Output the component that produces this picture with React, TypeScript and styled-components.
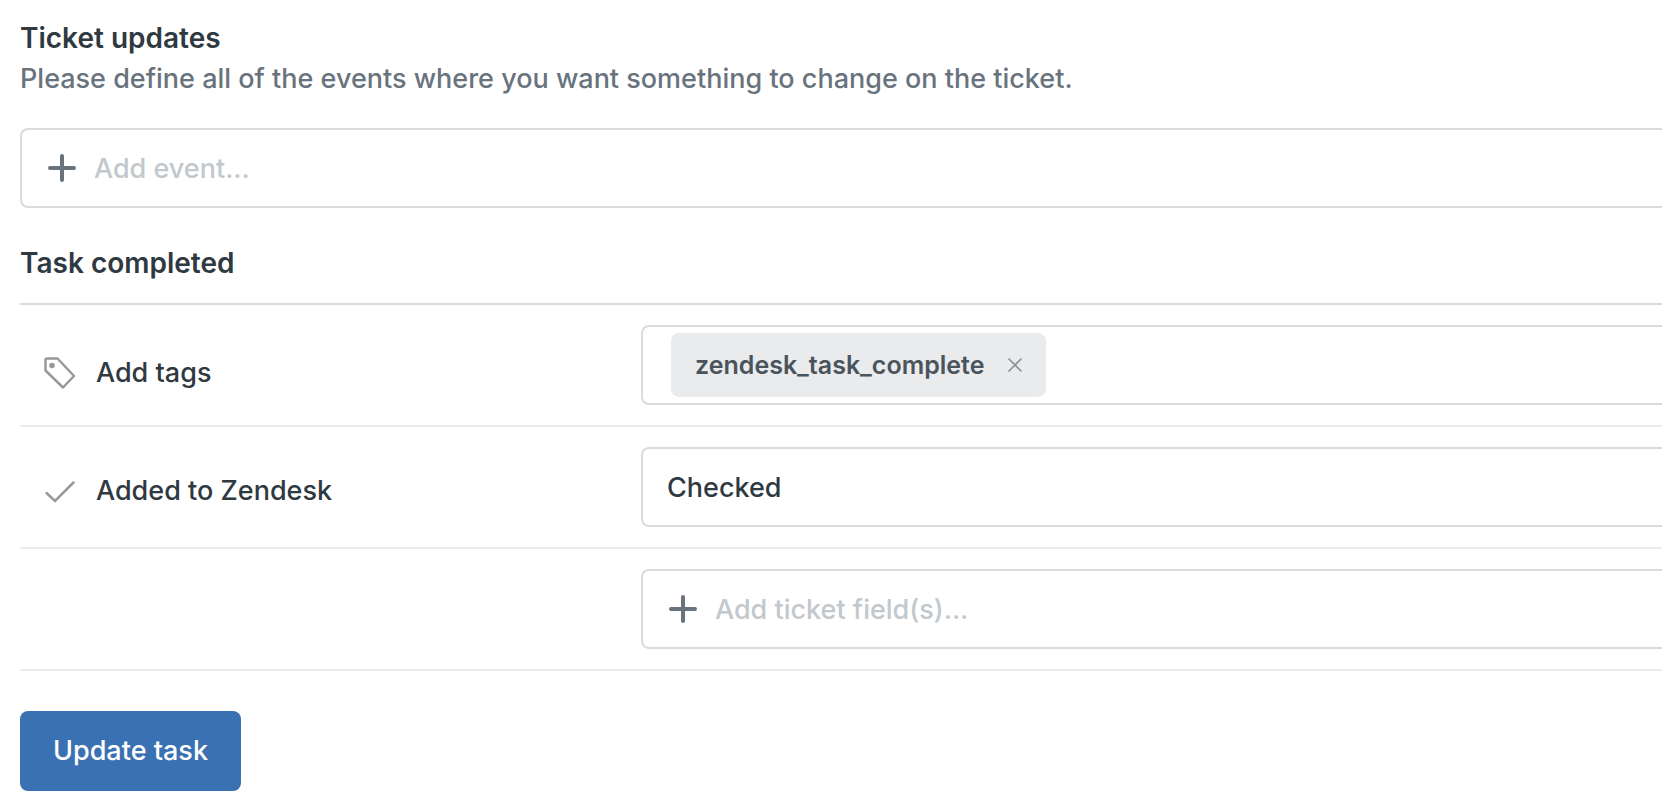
import React from "react";
import styled, { createGlobalStyle } from "styled-components";

const GlobalStyle = createGlobalStyle`
  *, *::before, *::after { box-sizing: border-box; }
  body {
    margin: 0;
    background: #fff;
    color: #2f3941;
    font-family: Inter, "Liberation Sans", sans-serif;
    font-size: 27px;
    font-weight: 450;
    line-height: 40px;
    overflow-x: hidden;
  }
`;

const Form = styled.form`
  display: flex;
  flex-direction: column;
  align-items: stretch;
  padding: 18px 0 16px 20px;
`;

const Heading = styled.h2<{ $spaced?: boolean }>`
  margin: ${(p) => (p.$spaced ? "35px 0 20px" : "0")};
  font-size: 28px;
  line-height: 40px;
  font-weight: 600;
`;

const Description = styled.p`
  margin: 1px 0 29px;
  color: #68737d;
`;

const Field = styled.div<{ $tight?: boolean }>`
  display: flex;
  flex: 1 1 auto;
  align-items: center;
  gap: 18px;
  min-width: 0;
  min-height: 80px;
  padding-left: ${(p) => (p.$tight ? 28 : 24)}px;
  border: 2px solid #d8dcde;
  border-right: 0;
  border-radius: 8px 0 0 8px;
  background: #fff;
`;

const TextInput = styled.input`
  flex: 1;
  min-width: 0;
  height: 76px;
  padding: 0;
  border: 0;
  outline: 0;
  background: transparent;
  color: inherit;
  font: inherit;
  &::placeholder {
    color: #c2c8cc;
    opacity: 1;
  }
`;

const Rows = styled.div`
  border-top: 2px solid #d8dcde;
`;

const Row = styled.div`
  display: flex;
  align-items: center;
  padding: 20px 0;
  border-bottom: 2px solid #ebebeb;
`;

const Label = styled.label<{ $drop?: number }>`
  display: flex;
  flex: 0 0 621px;
  align-items: center;
  gap: 19px;
  padding-top: ${(p) => p.$drop ?? 0}px;
  padding-left: 23px;
`;

const Chip = styled.span`
  display: flex;
  align-items: center;
  gap: 24px;
  height: 64px;
  padding: 0 24px;
  border-radius: 8px;
  background: #e9ebed;
  color: #49545c;
  font-size: 25px;
  font-weight: 600;
`;

const ChipRemove = styled.button`
  display: flex;
  padding: 0;
  border: 0;
  background: none;
  color: #87929a;
  cursor: pointer;
`;

const SubmitButton = styled.button`
  align-self: flex-start;
  height: 80px;
  margin-top: 40px;
  padding: 0 33px;
  border: 0;
  border-radius: 8px;
  background: #3a71b2;
  color: #fff;
  font: inherit;
  cursor: pointer;
`;

const PlusIcon = () => (
  <svg width="30" height="30" viewBox="0 0 30 30" fill="none" stroke="#68737d" strokeWidth="4" strokeLinecap="round" aria-hidden="true">
    <path d="M16 3v24M4 15h24" />
  </svg>
);

const TagIcon = () => (
  <svg width="34" height="34" viewBox="0 0 34 34" fill="none" stroke="#999" strokeWidth="2.500" strokeLinejoin="round" aria-hidden="true">
    <path d="M4 2.500H14.500L31 20L20 31.500L2.500 14.500V4Q2.500 2.500 4 2.500Z" />
    <circle cx="9" cy="9.500" r="2.800" fill="#999" stroke="none" />
  </svg>
);

const CheckIcon = () => (
  <svg width="34" height="34" viewBox="0 0 34 34" fill="none" stroke="#999" strokeWidth="2.500" strokeLinecap="round" aria-hidden="true">
    <path d="M3.500 19L12 27L30.500 8.500" />
  </svg>
);

const CloseIcon = () => (
  <svg width="14" height="14" viewBox="0 0 14 14" fill="none" stroke="currentColor" strokeWidth="1.700" strokeLinecap="round" aria-hidden="true">
    <path d="M1 1l12 12M13 1L1 13" />
  </svg>
);

export default function App() {
  return (
    <>
      <GlobalStyle />
      <Form onSubmit={(e) => e.preventDefault()}>
        <Heading>Ticket updates</Heading>
        <Description>Please define all of the events where you want something to change on the ticket.</Description>
        <Field>
          <PlusIcon />
          <TextInput aria-label="Add event" placeholder="Add event..." />
        </Field>
        <Heading $spaced>Task completed</Heading>
        <Rows>
          <Row>
            <Label htmlFor="tags" $drop={16}>
              <TagIcon />
              Add tags
            </Label>
            <Field $tight>
              <Chip>
                zendesk_task_complete
                <ChipRemove type="button" aria-label="Remove tag">
                  <CloseIcon />
                </ChipRemove>
              </Chip>
              <TextInput id="tags" />
            </Field>
          </Row>
          <Row>
            <Label htmlFor="added" $drop={8}>
              <CheckIcon />
              Added to Zendesk
            </Label>
            <Field>
              <TextInput id="added" defaultValue="Checked" />
            </Field>
          </Row>
          <Row>
            <Label htmlFor="fields" />
            <Field>
              <PlusIcon />
              <TextInput id="fields" aria-label="Add ticket fields" placeholder="Add ticket field(s)..." />
            </Field>
          </Row>
        </Rows>
        <SubmitButton type="submit">Update task</SubmitButton>
      </Form>
    </>
  );
}
